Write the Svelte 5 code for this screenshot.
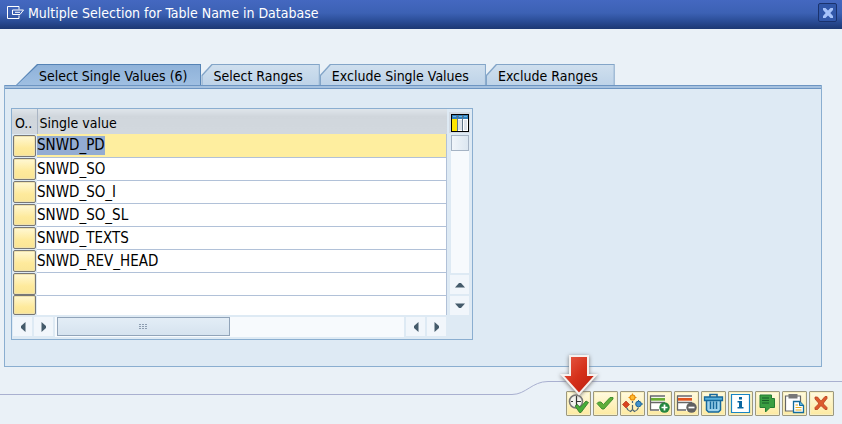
<script>
  const tabs = ['Select Single Values (6)', 'Select Ranges', 'Exclude Single Values', 'Exclude Ranges'];
  let active = $state(0);
  let rows = $state(['SNWD_PD', 'SNWD_SO', 'SNWD_SO_I', 'SNWD_SO_SL', 'SNWD_TEXTS', 'SNWD_REV_HEAD', '', '']);
  let selected = $state(0);
  const tools = [
    'Execute', 'Check', 'Multiple options', 'Insert row', 'Delete row',
    'Delete all', 'Information', 'Import from text file', 'Paste from clipboard', 'Cancel'
  ];
</script>

<div class="dialog" role="dialog" aria-labelledby="title">
  <header>
    <svg class="logo" viewBox="0 0 19 14" aria-hidden="true">
      <path d="M13 3.500V.5H1.500V12.500H13V9.500M6.500 4H17.500L14 8.500H6.500ZM9 6.300H14" fill="none" stroke="#fff" />
    </svg>
    <h1 id="title">Multiple Selection for Table Name in Database</h1>
    <button class="close" aria-label="Close">
      <svg viewBox="0 0 10 10"><path d="M0 0H2.500L5 2.500 7.500 0H10V2L7.300 5 10 8V10H7.500L5 7.500 2.500 10H0V8L2.700 5 0 2Z" fill="#a5c2fa" /></svg>
    </button>
  </header>

  <main>
    <div class="tabs" role="tablist">
      {#each tabs as tab, i}
        <button role="tab" class:active={active === i} aria-selected={active === i} onclick={() => (active = i)}><span>{tab}</span></button>
      {/each}
    </div>
    <section class="panel" role="tabpanel" aria-label={tabs[active]}>
      <div class="grid">
        <table>
          <thead>
            <tr><th class="option">O..</th><th>Single value</th></tr>
          </thead>
          <tbody>
            {#each rows as _, i}
              <tr class:selected={selected === i}>
                <td class="option"><button class="pick" aria-label="Option for row {i + 1}" onclick={() => (selected = i)}></button></td>
                <td><input aria-label="Single value {i + 1}" bind:value={rows[i]} onfocus={() => (selected = i)} /></td>
              </tr>
            {/each}
          </tbody>
        </table>
        <div class="vscroll">
          <button class="config" aria-label="Table settings">
            <svg viewBox="0 0 18 18">
              <path d="M0 0H18V18H0Z" fill="#000" />
              <path d="M1 1H17V17H1Z" fill="#fff" />
              <path d="M1 1H17V5H1Z" fill="#2f7fbd" />
              <path d="M1 5H6V17H1Z" fill="#ffe500" />
              <path d="M7 6H11V16H7ZM13 6H16V16H13Z" fill="#dde2ea" />
              <path d="M6.500 1V17M11.500 1V17" stroke="#5f7488" />
              <path d="M2 2.500H5M8 2.500H11M13 2.500H16" stroke="#69b3df" />
            </svg>
          </button>
          <div class="vtrack"><div class="vthumb"></div></div>
          <button class="step" aria-label="Scroll up"><svg viewBox="0 0 10 10"><path d="M0 7.500L4 3H6L10 7.500Z" /></svg></button>
          <button class="step" aria-label="Scroll down"><svg viewBox="0 0 10 10"><path d="M0 2.500L4 7H6L10 2.500Z" /></svg></button>
        </div>
        <div class="hscroll">
          <button class="step" aria-label="Scroll left"><svg viewBox="0 0 10 10"><path d="M7.500 0L3 4V6L7.500 10Z" /></svg></button>
          <button class="step" aria-label="Scroll right"><svg viewBox="0 0 10 10"><path d="M2.500 0L7 4V6L2.500 10Z" /></svg></button>
          <div class="htrack">
            <div class="hthumb">
              <svg viewBox="0 0 9 6"><path d="M0 .5H8M0 2.500H8M0 4.500H8" stroke="#8d9db0" stroke-dasharray="2 1" /></svg>
            </div>
          </div>
          <button class="step" aria-label="Page left"><svg viewBox="0 0 10 10"><path d="M7.500 0L3 4V6L7.500 10Z" /></svg></button>
          <button class="step" aria-label="Page right"><svg viewBox="0 0 10 10"><path d="M2.500 0L7 4V6L2.500 10Z" /></svg></button>
        </div>
      </div>
    </section>
  </main>

  <footer>
    <div class="low"></div>
    <svg class="curve" viewBox="0 0 36 14" aria-hidden="true"><path d="M0 13.500C14 13.500 20 .5 36 .5" fill="none" stroke="#a9b0d0" /></svg>
    <div class="tools">
      {#each tools as tool, i}
        <button aria-label={tool}>
          <svg viewBox="0 0 23 23" fill="none">
            {#if i === 0}
              <circle cx="9" cy="9.500" r="6.500" fill="#f4f4ef" stroke="#777" stroke-width="1.600" />
              <path d="M9.500 4V14M9.500 9.500H14M4 9.500H6" stroke="#333" stroke-width="1.200" />
              <path d="M8 14L10.500 12.500 13 15.500 19 9 21.500 10.500 14 20.500H12.500Z" fill="#46ad38" stroke="#2d7226" stroke-width=".8" />
            {:else if i === 1}
              <path d="M3 11.500L4.500 10H7L9.500 12.500 16 5.500H19V7L10 17H8Z" fill="#5fae3a" stroke="#3a8a2c" stroke-width=".9" />
            {:else if i === 2}
              <path d="M11.500 9V11M11.500 13V17M5.500 15.500Q6.500 18.500 9.500 19.500L11.500 17.500 13.500 19.500Q16.500 18.500 17.500 15.500" stroke="#4d6674" stroke-width="1.200" />
              <circle cx="11.500" cy="5.500" r="2.500" fill="#ffb92e" stroke="#e58a08" stroke-width="1.200" />
              <path d="M11.500 1.500V3M7.500 5.500H9M14 5.500H15.500" stroke="#e58a08" stroke-width="1.200" />
              <path d="M5 9L8.500 12.500 5 16 1.500 12.500Z" fill="#d9451f" stroke="#b73518" stroke-width=".7" />
              <circle cx="17.500" cy="12" r="2.800" fill="#4292cc" stroke="#19639a" />
              <path d="M17.500 8V9.500M20 12H22" stroke="#19639a" />
            {:else if i === 3 || i === 4}
              <path d="M2 3H17V19H2Z" fill="#fff" />
              <path d="M2 4H17M2 10.500H17M2 18H11M2.500 3.500V18" stroke="#666" stroke-width="1.300" />
              <path d="M3 7.300H17" stroke={i === 3 ? '#6aac32' : '#df541c'} stroke-width="2.800" />
              <circle cx="16.500" cy="15.500" r="5.200" fill={i === 3 ? '#25863e' : '#626262'} />
              <path d={i === 3 ? 'M13.500 15.500H19.500M16.500 12.500V18.500' : 'M13.500 15.500H19.500'} stroke="#fff" stroke-width="1.700" />
            {:else if i === 5}
              <path d="M4 8V18L6 20H17L19 18V8Z" fill="#9fd3ec" />
              <path d="M8 5V2.500H15V5" stroke="#17689b" stroke-width="1.600" />
              <path d="M2.500 5H20.500V8.500H2.500Z" fill="#58b2dc" stroke="#17689b" stroke-width="1.300" />
              <path d="M4.500 9V18L6.500 20H16.500L18.500 18V9M8.500 9.500V17M11.500 9.500V17M14.500 9.500V17" stroke="#17689b" stroke-width="1.500" />
            {:else if i === 6}
              <path d="M2.500 2.500H20.500V20.500H2.500Z" fill="#fff" stroke="#1885c4" stroke-width="1.200" />
              <path d="M10 5H13V7.500H10ZM8.500 9H13V15H14.500V16.500H8.500V15H10V10.500H8.500Z" fill="#08669f" />
            {:else if i === 7}
              <path d="M4 3H15.500V6.500H18.500V15.500H14L9.500 20V15.500H4Z" fill="#3b9e42" stroke="#247c32" />
              <path d="M6 6H13M6 8.500H13M6 11H13" stroke="#195b28" stroke-width="1.100" />
            {:else if i === 8}
              <path d="M2.500 4H17.500V19H2.500Z" fill="#fff" stroke="#666" stroke-width="1.200" />
              <path d="M5.500 2H14.500V6.500H5.500Z" fill="#777" />
              <path d="M10.500 9.500H16.500L20.500 13.500V20.500H10.500Z" fill="#fff" stroke="#126c9d" stroke-width="1.300" />
              <path d="M16.500 9.500V13.500H20.500" fill="#5bb2d9" stroke="#126c9d" />
              <path d="M12.500 13H15M12.500 15.500H18.500M12.500 18H18.500" stroke="#e4ab19" stroke-width="1.200" />
            {:else}
              <path d="M5 5H7.500L10.500 8.500H11.500L15 4.500H17V6.500L13.500 11V12L17 15.500V17.500H15L11.500 14H10.500L7.500 17.500H5V15.500L8.500 12V11L5 7Z" fill="#dc5a2c" stroke="#b8401e" stroke-width=".8" />
            {/if}
          </svg>
        </button>
      {/each}
      <svg class="pointer" viewBox="0 0 42 44" aria-hidden="true">
        <defs>
          <linearGradient id="red" x1="0" y1="0" x2="1" y2="1"><stop stop-color="#e8604a" /><stop offset=".5" stop-color="#d5301a" /><stop offset="1" stop-color="#b71d0d" /></linearGradient>
        </defs>
        <path d="M12 3H30V22H38L21 41 4 22H12Z" fill="url(#red)" stroke="#f5f1ef" stroke-width="2" />
      </svg>
    </div>
  </footer>
</div>

<style>
  :global(body) { margin: 0; background: #eaf1f7; }
  .dialog {
    display: flex; flex-direction: column; min-height: 100vh; overflow: hidden;
    background: #eaf1f7; color: #000; font: 14px/20px "DejaVu Sans Condensed", Tahoma, sans-serif;
  }
  .dialog * { box-sizing: border-box; }
  button { margin: 0; padding: 0; border: 0; font: inherit; color: inherit; cursor: pointer; }
  svg { display: block; }
  header {
    display: flex; align-items: center; height: 29px; padding: 0 5px 4px 6px; color: #fff;
    background: linear-gradient(#4468c0, #3c61b4 45%, #294b94 75%, #1c3873);
  }
  .logo { width: 19px; height: 14px; margin-right: 3px; }
  h1 { flex: 1; margin: 0; font-size: 14px; font-weight: 400; }
  .close {
    display: grid; place-items: center; width: 19px; height: 19px; border: 1px solid #1a326d;
    border-radius: 2px; background: #3157a9;
  }
  .close svg { width: 10px; height: 10px; }
  main { padding: 35px 20px 0 4px; }
  .tabs { display: flex; height: 21px; padding-left: 12px; }
  .tabs button {
    position: relative; height: 21px; padding: 2px 17px 0 12px; background: #83a5c8;
    clip-path: polygon(0 11px, 10px 0, 100% 0, 100% 100%, 0 100%);
  }
  .tabs button::before {
    content: ""; position: absolute; inset: 1px 1px 0; background: linear-gradient(#cfdfee, #bed3e8);
    clip-path: polygon(0 11px, 10px 0, 100% 0, 100% 100%, 0 100%);
  }
  .tabs button.active { padding: 2px 14px 0 23px; background: #5583b5; clip-path: polygon(0 100%, 21px 0, 100% 0, 100% 100%); }
  .tabs .active::before { background: linear-gradient(#8fb2d9, #9fbfe2); clip-path: polygon(0 100%, 21px 0, 100% 0, 100% 100%); }
  .tabs span { position: relative; }
  .panel {
    padding: 23px 7px 26px 6px; border: 1px solid #8aaed0; border-top: 0;
    background: linear-gradient(#6d95c2 1px, #a5c1df 1px 3px, #6d95c2 3px 4px, #deeaf4 4px);
  }
  .grid {
    display: grid; grid-template-columns: 1fr 25px; width: 58%; max-width: 462px;
    border: 1px solid #8aaed0; background: #deeaf4;
  }
  table { width: 100%; border-collapse: collapse; table-layout: fixed; background: #fff; }
  th {
    height: 25px; padding: 3px 2px 0; text-align: left; font-weight: 400;
    background: linear-gradient(#dfe5ea, #d0d6dc 30%, #d2d8de);
  }
  .option { width: 25px; padding: 0 1px; background: #deeaf4; }
  th.option { padding: 3px 0 0 3px; border-right: 1px solid #aab5c4; background: linear-gradient(#dfe5ea, #d0d6dc 30%, #d2d8de); }
  td { height: 23px; padding: 0; border-bottom: 1px solid #b1c1d8; border-right: 1px solid #b1c1d8; }
  td.option { border: 0; }
  tbody tr:last-child td { height: 20px; border-bottom: 0; }
  .selected td:not(.option) { background: #feee9f; }
  .pick {
    display: block; width: 23px; height: 22px; border: 1px solid #777; border-radius: 2px;
    background: linear-gradient(#fff8d4, #feea9c 60%, #fae596); box-shadow: inset 0 0 0 1px #efe2ad;
  }
  tr:last-child .pick { height: 20px; }
  input {
    display: block; width: 100%; height: 19px; padding: 0; border: 0; outline: 0;
    background: transparent; color: #000; font: inherit; font-size: 15px;
  }
  .selected input { width: auto; field-sizing: content; background: #93acd2; }
  .vscroll { display: flex; flex-direction: column; align-items: center; padding-top: 3px; gap: 2px; }
  .config { display: grid; place-items: center; width: 21px; height: 21px; background: #d2dae3; }
  .config svg { width: 18px; height: 18px; }
  .vtrack { flex: 1; width: 18px; background: #f7fafd; }
  .vthumb { height: 16px; border: 1px solid #a5b3c4; background: linear-gradient(90deg, #f0f5fa, #dce7f1); }
  .step { display: grid; place-items: center; width: 19px; height: 19px; background: #f1f6fb; }
  .step svg { width: 10px; height: 10px; fill: #455b6b; }
  .hscroll { display: flex; gap: 2px; height: 24px; padding: 2px 1px; }
  .htrack { flex: 1; padding: 0 2px; background: #f7fafd; }
  .hthumb {
    display: grid; place-items: center; width: 50%; height: 19px; border: 1px solid #91a4b9;
    background: linear-gradient(#e3edf6, #d6e3ef);
  }
  .hthumb svg { width: 9px; height: 6px; }
  footer { display: flex; margin-top: auto; height: 43px; }
  .low { flex: 1; margin-top: 13px; border-top: 1px solid #a9b0d0; }
  .curve { width: 36px; height: 14px; }
  .tools { position: relative; display: flex; gap: 2px; padding: 9px 8px 0 18px; border-top: 1px solid #a9b0d0; }
  .tools button {
    width: 25px; height: 25px; border: 1px solid #9c987f; border-radius: 1px;
    background: linear-gradient(#fffae0, #fdeaa1); box-shadow: inset 0 0 0 1px #f8efbf;
  }
  .tools button svg { width: 23px; height: 23px; }
  .pointer {
    position: absolute; left: 10px; top: -29px; width: 42px; height: 44px; pointer-events: none;
    filter: drop-shadow(0 1px 2px #777);
  }
</style>
